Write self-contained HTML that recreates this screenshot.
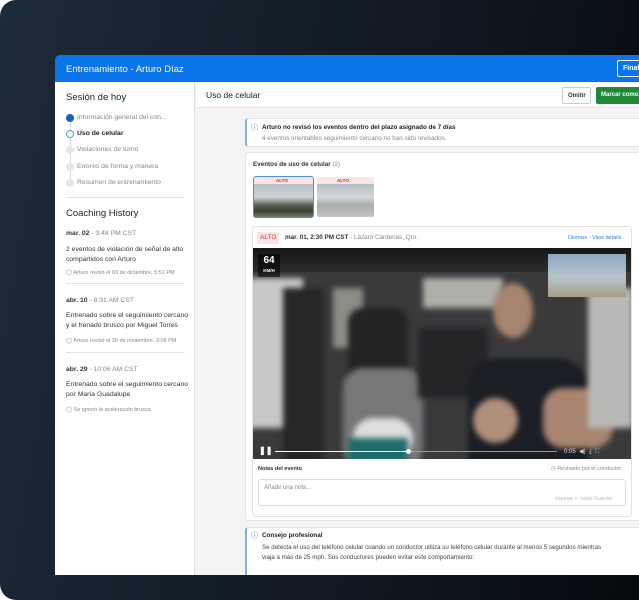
<!DOCTYPE html><html><head><meta charset="utf-8"><style>
*{box-sizing:border-box;margin:0;padding:0}
body{width:639px;height:557px;overflow:hidden;background:#fff;font-family:"Liberation Sans",sans-serif;position:relative}
.bg{position:absolute;left:0;top:0;width:680px;height:600px;border-radius:16px;background:linear-gradient(100deg,#1d2a38 0%,#111a24 50%,#05080c 100%)}
.win{position:absolute;left:55px;top:55px;width:600px;height:520px;background:#f4f4f5;border-radius:6px 0 0 0;overflow:hidden}
.hdr{position:absolute;left:0;top:0;width:600px;height:27px;background:#0a75e8;color:#fff;font-size:9.5px;padding:9px 0 0 11px}
.fin{position:absolute;left:562px;top:5px;height:17px;border:1px solid #fff;border-radius:2px;font-size:7px;padding:4px 5px;font-weight:bold}
.side{position:absolute;left:0;top:27px;width:140px;height:500px;background:#fff;border-right:1px solid #ddd;color:#333}
.t{position:absolute;font-size:7.2px;color:#333;white-space:nowrap}
.side .t{font-size:6.8px}
.g{color:#888}
.dot{position:absolute;left:11px;width:8px;height:8px;border-radius:50%;background:#e6e6e6}
.main{position:absolute;left:141px;top:27px;width:460px;height:26px;background:#fff;border-bottom:1px solid #e3e3e3}
.card{position:absolute;background:#fff;border:1px solid #e3e3e3;border-radius:3px}
.b{position:absolute;filter:blur(3px)}
</style></head><body>
<div class="bg"></div>
<div class="win">
<div class="hdr">Entrenamiento - Arturo Díaz<div class="fin">Finali</div></div>
<div class="side">
<div class="t" style="left:11px;top:10px;font-size:9.5px;color:#222">Sesión de hoy</div>
<div style="position:absolute;left:14.5px;top:37px;width:1px;height:65px;background:#ddd"></div>
<div class="dot" style="top:32px;background:#1a5fc7"></div>
<div class="dot" style="top:48px;background:#fff;border:1px solid #5b9be3"></div>
<div class="dot" style="top:64px"></div><div class="dot" style="top:81px"></div><div class="dot" style="top:97px"></div>
<div class="t g" style="left:22px;top:32px">Información general del con...</div>
<div class="t" style="left:22px;top:48px;font-weight:bold;color:#222">Uso de celular</div>
<div class="t g" style="left:22px;top:64px">Violaciones de turno</div>
<div class="t g" style="left:22px;top:81px">Errores de forma y manera</div>
<div class="t g" style="left:22px;top:97px">Resumen de entrenamiento</div>
<div style="position:absolute;left:11px;top:115px;width:119px;height:1px;background:#e3e3e3"></div>
<div class="t" style="left:11px;top:126px;font-size:9.5px;color:#222">Coaching History</div>
<div class="t" style="left:11px;top:148px"><b>mar. 02</b> <span class="g">- 3:48 PM CST</span></div>
<div class="t" style="left:11px;top:163px;line-height:10px">2 eventos de violación de señal de alto<br>compartidos con Arturo</div>
<div class="t g" style="left:11px;top:188px;font-size:5.5px">◯ Arturo revisó el 03 de diciembre, 5:51 PM</div>
<div style="position:absolute;left:11px;top:201px;width:119px;height:1px;background:#e3e3e3"></div>
<div class="t" style="left:11px;top:215px"><b>abr. 10</b> <span class="g">- 8:31 AM CST</span></div>
<div class="t" style="left:11px;top:229px;line-height:10px">Entrenado sobre el seguimiento cercano<br>y el frenado brusco por Miguel Torres</div>
<div class="t g" style="left:11px;top:256px;font-size:5.5px">◯ Arturo revisó el 30 de noviembre, 3:08 PM</div>
<div style="position:absolute;left:11px;top:270px;width:119px;height:1px;background:#e3e3e3"></div>
<div class="t" style="left:11px;top:284px"><b>abr. 29</b> <span class="g">- 10:06 AM CST</span></div>
<div class="t" style="left:11px;top:298px;line-height:10px">Entrenado sobre el seguimiento cercano<br>por María Guadalupe</div>
<div class="t g" style="left:11px;top:325px;font-size:5.5px">◯ Se ignoró la aceleración brusca</div>
</div>
<div class="main">
<div class="t" style="left:10px;top:8px;font-size:8.5px;color:#222">Uso de celular</div>
<div style="position:absolute;left:366px;top:5px;width:29px;height:17px;border:1px solid #ccc;border-radius:2px;font-size:6px;font-weight:bold;color:#333;padding:5px 0 0 5px">Omitir</div>
<div style="position:absolute;left:400px;top:5px;width:70px;height:17px;background:#1f8a36;border-radius:2px;font-size:6px;font-weight:bold;color:#fff;padding:5px 0 0 5px">Marcar como</div>
</div>
<div class="card" style="left:190px;top:63px;width:400px;height:29px;border-left:2px solid #7fb0de">
<div class="t" style="left:4px;top:4px;color:#3b7fd0">ⓘ</div>
<div class="t" style="left:15px;top:5px;font-size:6.3px;font-weight:bold;color:#222">Arturo no revisó los eventos dentro del plazo asignado de 7 días</div>
<div class="t g" style="left:15px;top:16px;font-size:6.3px">4 eventos orientables seguimiento cercano no han sido revisados.</div>
</div>
<div class="card" style="left:190px;top:97px;width:400px;height:369px">
<div class="t" style="left:7px;top:8px;font-size:6.3px;font-weight:bold">Eventos de uso de celular <span class="g" style="font-weight:normal">(2)</span></div>
<div style="position:absolute;left:7px;top:23px;width:61px;height:42px;border:1.5px solid #4a90dd;border-radius:3px;overflow:hidden;background:linear-gradient(#fde4e4 0 7px,#b9bec4 7px,#d0d4d8 20px,#5b6458 28px,#39402f 34px,#8a8c80 42px)"><div class="t" style="left:22px;top:1px;font-size:4.5px;color:#c22;font-weight:bold">ALTO</div></div>
<div style="position:absolute;left:71px;top:24px;width:57px;height:40px;border-radius:2px;overflow:hidden;background:linear-gradient(#fde4e4 0 7px,#b4bcc4 7px,#d4d8dc 20px,#a9aca8 28px,#c6c6c4 40px)"><div class="t" style="left:20px;top:1px;font-size:4.5px;color:#c22;font-weight:bold">ALTO</div></div>
<div class="card" style="left:6px;top:73px;width:380px;height:291px">
<div style="position:absolute;left:4px;top:5px;width:22px;height:12px;background:#fde4e4;color:#d33;font-size:6.5px;padding:2px 0 0 3px">ALTO</div>
<div class="t" style="left:32px;top:7px;font-size:6.3px;font-weight:bold;color:#333">mar. 01, 2:30 PM CST <span class="g" style="font-weight:normal">- Lázaro Cárdenas, Qro.</span></div>
<div class="t" style="left:315px;top:8px;font-size:5.5px;color:#3b7fd0">Dismiss · View details</div>
<div style="position:absolute;left:0;top:21px;width:378px;height:211px;background:#3a3a3c;overflow:hidden">
<div class="b" style="left:-5px;top:30px;width:55px;height:150px;background:#c8c8c6"></div>
<div class="b" style="left:30px;top:40px;width:40px;height:180px;background:#262628"></div>
<div class="b" style="left:80px;top:40px;width:30px;height:60px;background:#8d8d86"></div>
<div class="b" style="left:95px;top:60px;width:60px;height:80px;background:#232325;border-radius:14px"></div>
<div class="b" style="left:90px;top:120px;width:80px;height:100px;background:#777779;border-radius:20px"></div>
<div class="b" style="left:100px;top:170px;width:60px;height:40px;background:#ddd;border-radius:20px"></div>
<div class="b" style="left:95px;top:190px;width:60px;height:25px;background:#1f6b6b"></div>
<div class="b" style="left:170px;top:30px;width:80px;height:30px;background:#b0aea8"></div>
<div class="b" style="left:165px;top:80px;width:70px;height:70px;background:#252528"></div>
<div class="b" style="left:215px;top:110px;width:120px;height:110px;background:#1b1e24;border-radius:30px 30px 0 0"></div>
<div class="b" style="left:240px;top:35px;width:40px;height:55px;background:#a6846f;border-radius:50%"></div>
<div class="b" style="left:220px;top:150px;width:45px;height:45px;background:#b08f7b;border-radius:50%"></div>
<div class="b" style="left:290px;top:140px;width:70px;height:60px;background:#a88471;border-radius:20px"></div>
<div class="b" style="left:335px;top:40px;width:45px;height:140px;background:#b8b8b6"></div>
<div style="position:absolute;left:0;top:0;width:378px;height:24px;background:linear-gradient(#161616,#2c2c2c)"></div>
<div style="position:absolute;left:295px;top:6px;width:78px;height:43px;background:linear-gradient(#8fa6c2,#b7c3cc 55%,#a59d83)"></div>
<div style="position:absolute;left:5px;top:6px;width:22px;height:23px;background:rgba(0,0,0,.55);color:#fff;font-size:10px;font-weight:bold;text-align:center;padding-top:2px;line-height:9px">64<br><span style="font-size:4.5px">KM/H</span></div>
<div style="position:absolute;left:22px;top:203px;width:282px;height:1px;background:#999"></div>
<div style="position:absolute;left:22px;top:203px;width:133px;height:1px;background:#fff"></div>
<div style="position:absolute;left:153px;top:201px;width:5px;height:5px;border-radius:50%;background:#fff"></div>
<div class="t" style="left:6px;top:198px;color:#fff;font-size:8px;font-weight:bold">❚❚</div>
<div class="t" style="left:311px;top:200px;color:#ddd;font-size:6px">0:05 &nbsp;◀) &nbsp;⤓ &nbsp;⛶</div>
</div>
<div class="t" style="left:5px;top:239px;font-size:5.5px;font-weight:bold">Notas del evento</div>
<div class="t g" style="left:298px;top:239px;font-size:5.5px">◷ Revisado por el conductor</div>
<div style="position:absolute;left:5px;top:252px;width:368px;height:27px;border:1px solid #ddd;border-radius:3px">
<div class="t g" style="left:5px;top:5px;font-size:6px">Añadir una nota...</div>
<div class="t" style="left:296px;top:16px;font-size:5px;color:#bbb">Ingresar ↵ hasta Guardar</div></div>
</div></div>
<div class="card" style="left:190px;top:472px;width:400px;height:60px;border-left:2px solid #7fb0de">
<div class="t" style="left:4px;top:3px;color:#3b7fd0">ⓘ</div>
<div class="t" style="left:15px;top:4px;font-size:6.3px;font-weight:bold;color:#222">Consejo profesional</div>
<div class="t" style="left:15px;top:15px;font-size:6.2px;color:#444;line-height:10px">Se detecta el uso del teléfono celular cuando un conductor utiliza su teléfono celular durante al menos 5 segundos mientras<br>viaja a más de 25 mph. Sus conductores pueden evitar este comportamiento:</div>
</div>
</div>
</body></html>
